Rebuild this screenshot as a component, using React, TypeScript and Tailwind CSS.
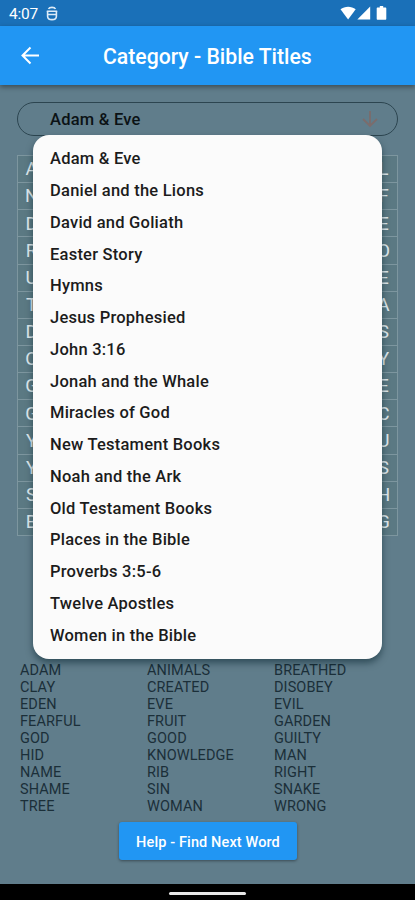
import React from 'react';

const titles = [
    'Adam & Eve',
    'Daniel and the Lions',
    'David and Goliath',
    'Easter Story',
    'Hymns',
    'Jesus Prophesied',
    'John 3:16',
    'Jonah and the Whale',
    'Miracles of God',
    'New Testament Books',
    'Noah and the Ark',
    'Old Testament Books',
    'Places in the Bible',
    'Proverbs 3:5-6',
    'Twelve Apostles',
    'Women in the Bible',
];

// first and last letter of every puzzle row, the rest sits under the menu
const rows = ['AL', 'NF', 'DE', 'RO', 'UE', 'TA', 'DS', 'OY', 'GE', 'GC', 'YU', 'YS', 'SH', 'BG'];

const words = [
    ['ADAM', 'CLAY', 'EDEN', 'FEARFUL', 'GOD', 'HID', 'NAME', 'SHAME', 'TREE'],
    ['ANIMALS', 'CREATED', 'EVE', 'FRUIT', 'GOOD', 'KNOWLEDGE', 'RIB', 'SIN', 'WOMAN'],
    ['BREATHED', 'DISOBEY', 'EVIL', 'GARDEN', 'GUILTY', 'MAN', 'RIGHT', 'SNAKE', 'WRONG'],
];

const StatusBar: React.FC = () => {
    return (
        <div className="flex h-[26px] shrink-0 items-center bg-[#1a70b8] pl-[9px] pr-[27px] text-white">
            <span className="pt-[3px] text-[15.5px] leading-none tracking-[-0.2px]">4:07</span>
            <svg className="ml-[8px]" width="12" height="15" viewBox="0 0 12 15" fill="none" stroke="#dcebf8">
                <path d="M2.500 3C3.500.800 8.500.800 9.500 3" strokeWidth="1.600" />
                <path d="M.8 5.200h10.400M1.500 8.400h9" strokeWidth="1.500" />
                <path d="M1.600 5v5.200c0 2 1.900 3.400 4.400 3.400s4.400-1.400 4.400-3.400V5" strokeWidth="1.600" />
            </svg>
            <svg className="ml-auto" width="48" height="16" viewBox="0 0 48 16" fill="currentColor">
                <path d="M.5 4.300C4.700.800 11.500.800 15.700 4.300L8.100 14.500z" />
                <path d="M30.200 1.500v13H17.300z" />
                <path d="M39.800 1h3.400v1.500h2.100c.6 0 1 .4 1 1v10.300c0 .6-.4 1-1 1h-7.600c-.6 0-1-.4-1-1V3.500c0-.6.400-1 1-1h2.100z" />
            </svg>
        </div>
    );
};

const App: React.FC = () => {
    return (
        <div className="flex h-[900px] w-[415px] flex-col overflow-hidden bg-[#607d8b] font-[Roboto,sans-serif]">
            <StatusBar />
            <div className="relative flex h-[59px] shrink-0 items-center bg-[#2196f3] text-white shadow-[0_2px_5px_rgba(0,0,0,0.4)]">
                <svg className="ml-[21px]" width="19" height="19" viewBox="0 0 19 19" fill="none" stroke="currentColor" strokeWidth="2">
                    <path d="M18 9.500H2M9.500 1.500l-8 8 8 8" />
                </svg>
                <h1 className="ml-[63px] whitespace-nowrap pt-[2px] text-[21.200px] font-medium leading-none">Category - Bible Titles</h1>
            </div>

            <div className="relative mx-[17px] mt-[17px] flex h-[34px] shrink-0 items-center justify-between rounded-full border border-[#2c4550] pl-[32px] pr-[18px]">
                <span className="pt-[2px] text-[16.500px] font-medium tracking-[0.230px] text-[#0b1215]">Adam &amp; Eve</span>
                <svg width="18" height="18" viewBox="0 0 18 18" fill="none" stroke="#7b6c6c" strokeWidth="1.800">
                    <path d="M9 1v15M2 9l7 7 7-7" />
                </svg>

                <ul className="absolute left-[15px] top-[32px] z-10 h-[524px] w-[349px] rounded-[16px] bg-[#fbfbfb] py-2 shadow-[0_4px_7px_rgba(0,30,40,0.5)]">
                    {titles.map((title) => (
                        <li key={title} className="flex h-[31.750px] items-center pl-[17px] pt-[1.500px] text-[16.500px] font-medium tracking-[0.230px] text-[#1c1c1c]">
                            {title}
                        </li>
                    ))}
                </ul>
            </div>

            <div className="mx-[17px] mt-[19px] flex h-[381px] shrink-0 flex-col border border-[#7d969f] bg-[#5b7983]">
                {rows.map((row, i) => (
                    <div key={i} className="flex flex-1 items-center justify-between border-b border-[#7d969f] text-[18.500px] leading-none text-[#dfe9ed] last:border-b-0">
                        <span className="w-[27px] pt-px text-center">{row[0]}</span>
                        <span className="w-[27px] pt-px text-center">{row[1]}</span>
                    </div>
                ))}
            </div>

            <div className="ml-[20px] mt-[127px] grid h-[152px] shrink-0 grid-cols-[127px_127px_127px] text-[14.500px] leading-[16.950px] tracking-[0.100px] text-[#1b2f39]">
                {words.map((column, i) => (
                    <div key={i} className="flex flex-col">
                        {column.map((word) => (
                            <span key={word}>{word}</span>
                        ))}
                    </div>
                ))}
            </div>

            <button className="ml-[119px] mt-[7px] h-[38px] w-[178px] shrink-0 rounded-[3px] bg-[#2196f3] pt-[3px] text-[14.500px] font-medium tracking-[0.120px] text-white shadow-[0_1px_3px_rgba(0,0,0,0.4)]">
                Help - Find Next Word
            </button>

            <div className="mt-auto flex h-[16px] shrink-0 items-center justify-center bg-black pt-[2px]">
                <div className="h-[3px] w-[77px] rounded-full bg-[#e8e8e8]" />
            </div>
        </div>
    );
};

export default App;
